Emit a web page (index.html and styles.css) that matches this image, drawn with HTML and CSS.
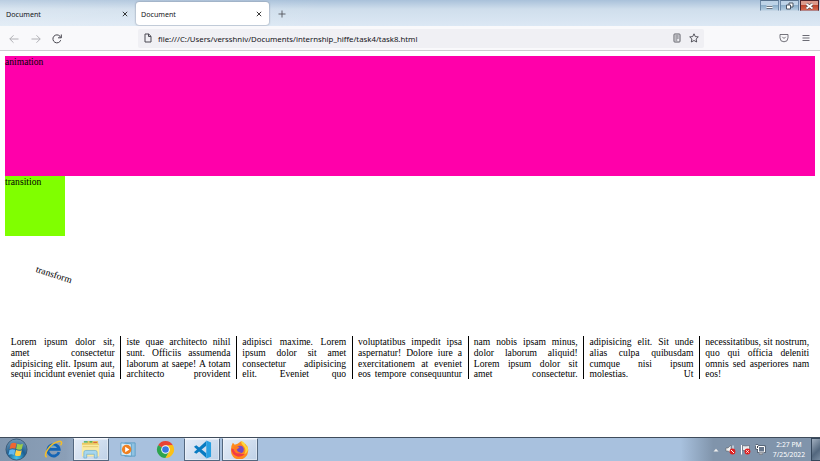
FILE: index.html
```html
<!DOCTYPE html>
<html lang="en">
<head>
<meta charset="utf-8">
<title>Document</title>
<link rel="stylesheet" href="styles.css">
</head>
<body>
<header class="tabs">
  <div class="tab"><span>Document</span><svg class="close" viewBox="0 0 6 6"><path d="M.8.8l4.4 4.4M5.2.8L.8 5.2"/></svg></div>
  <div class="tab active"><span>Document</span><svg class="close" viewBox="0 0 6 6"><path d="M.8.8l4.4 4.4M5.2.8L.8 5.2"/></svg></div>
  <svg class="plus" viewBox="0 0 8 8"><path d="M4 .5v7M.5 4h7"/></svg>
  <div class="controls">
    <div class="ctl"><svg viewBox="0 0 17 10"><path d="M5.500 6h6" stroke="#fff" stroke-width="3"/><path d="M5.500 5.500h6M5.500 7.500h6" stroke="#4b5664" stroke-width=".8"/></svg></div>
    <div class="ctl"><svg viewBox="0 0 17 10"><path d="M8 2h4v4H8z" fill="#fff" stroke="#4b5664"/><path d="M5.500 4h4v4h-4z" fill="#fff" stroke="#4b5664"/></svg></div>
    <div class="ctl red"><svg viewBox="0 0 17 10"><path d="M5.500 3l6 4.500M11.500 3l-6 4.500" stroke="#59484c" stroke-width="3"/><path d="M5.500 3l6 4.500M11.500 3l-6 4.500" stroke="#fff" stroke-width="1.700"/></svg></div>
  </div>
</header>
<nav class="toolbar">
  <svg class="tool dim" viewBox="0 0 10 10"><path d="M9.500 5H.8M4.500 1.300L.8 5l3.700 3.700"/></svg>
  <svg class="tool dim" viewBox="0 0 10 10"><path d="M.5 5h8.700M5.500 1.300L9.200 5 5.500 8.700"/></svg>
  <svg class="tool" viewBox="0 0 10 10"><path d="M8.700 6.200A4 4 0 1 1 8 2.300L9 3.500M9.300.5v3.300H6"/></svg>
  <div class="address">
    <svg class="page-icon" viewBox="0 0 8 10"><path d="M1 1h3.700L7 3.300V9H1zM4.500 1v2.500H7"/></svg>
    <span class="url">file:///C:/Users/versshniv/Documents/internship_hiffe/task4/task8.html</span>
    <svg class="reader" viewBox="0 0 8 10"><rect x="1" y="1" width="6" height="8" rx=".7"/><path d="M2.300 3h3.400M2.300 5h3.400M2.300 7h2"/></svg>
    <svg class="star" viewBox="0 0 10 10"><path d="M5 .8l1.300 2.800 3 .3-2.200 2.100.6 3L5 7.500 2.300 9l.6-3L.7 3.900l3-.3z"/></svg>
  </div>
  <svg class="pocket" viewBox="0 0 10 10"><path d="M1 1.500h8v3.300a4 4 0 0 1-8 0zM3.300 3.800L5 5.500l1.700-1.700"/></svg>
  <svg class="menu" viewBox="0 0 8 8"><path d="M.5 1.500h7M.5 4h7M.5 6.500h7"/></svg>
</nav>
<main class="page">
  <div class="animation">animation</div>
  <div class="transition">transition</div>
  <div class="transform">transform</div>
  <div class="columns">
    <p><span>Lorem ipsum dolor sit,</span><span>amet consectetur</span><span>adipisicing elit. Ipsum aut,</span><span>sequi incidunt eveniet quia</span></p>
    <p><span>iste quae architecto nihil</span><span>sunt. Officiis assumenda</span><span>laborum at saepe! A totam</span><span>architecto provident</span></p>
    <p><span>adipisci maxime. Lorem</span><span>ipsum dolor sit amet</span><span>consectetur adipisicing</span><span>elit. Eveniet quo</span></p>
    <p><span>voluptatibus impedit ipsa</span><span>aspernatur! Dolore iure a</span><span>exercitationem at eveniet</span><span>eos tempore consequuntur</span></p>
    <p><span>nam nobis ipsam minus,</span><span>dolor laborum aliquid!</span><span>Lorem ipsum dolor sit</span><span>amet consectetur.</span></p>
    <p><span>adipisicing elit. Sit unde</span><span>alias culpa quibusdam</span><span>cumque nisi ipsum</span><span>molestias. Ut</span></p>
    <p><span>necessitatibus, sit nostrum,</span><span>quo qui officia deleniti</span><span>omnis sed asperiores nam</span><span class="last">eos!</span></p>
  </div>
</main>
<footer class="taskbar">
  <div class="app start"><svg viewBox="0 0 24 24"><defs><radialGradient id="orb" cx=".5" cy=".9" r=".85"><stop offset="0" stop-color="#43c5ed"/><stop offset=".5" stop-color="#1d5f92"/><stop offset="1" stop-color="#6b93b3"/></radialGradient></defs><circle cx="12" cy="12" r="11" fill="url(#orb)" stroke="#31506d" stroke-width=".8"/><path d="M6 6q3-2 6-.3l-1.200 5.600q-3-1.500-6 .2z" fill="#ef6531"/><path d="M12.800 6q3 1.500 6 .1l-1.300 5.600q-3 1.400-5.900-.1z" fill="#9ccc4a"/><path d="M4.700 12.500q3-1.500 6-.2l-1.200 5.400q-3-1.500-6 .1z" fill="#61b8ef"/><path d="M11.500 12.600q3 1.500 6 .2l-1.300 5.400q-3 1.300-5.900-.3z" fill="#ffd149"/></svg></div>
  <div class="app ie"><svg viewBox="0 0 20 20"><path d="M15.800 12.700A6 6 0 1 1 16 9.800H5" fill="none" stroke="#1565b5" stroke-width="3"/><path d="M7 7.800Q9.500 4.500 12.500 7.800" fill="none" stroke="#55b7ee"/><path d="M3 18C-2 16 7 3 15.500 1.500c4-.6 3.500 2 2 4" fill="none" stroke="#f2bd2b" stroke-width="1.600"/></svg></div>
  <div class="app open folder"><svg viewBox="0 0 20 20"><path d="M1 3h5l1-2h11v3h1v13H1z" fill="#e9c961"/><path d="M3 2h4M9 2h3" stroke="#36a852" stroke-width="1.300"/><path d="M13 2.500h4" stroke="#d75435"/><path d="M1 5h18v12H1z" fill="#faeaa1"/><path d="M2 7h16" stroke="#e5cb74"/><path d="M3 19v-6q0-2 2-2h10q2 0 2 2v6h-3v-4H6v4z" fill="#a6d6ef" stroke="#69a9cb" stroke-width=".7"/></svg></div>
  <div class="app media"><svg viewBox="0 0 18 18"><path d="M5 2h11v14H5z" fill="#8fc2e2" stroke="#5e9fc7"/><path d="M1 2l11 1v13l-11-1z" fill="#d4eaf6" stroke="#5e9fc7"/><circle cx="7" cy="9" r="5" fill="#f08020"/><path d="M5.500 6l4.500 3-4.500 3z" fill="#fff"/></svg></div>
  <div class="app chrome"><svg viewBox="0 0 20 20"><path d="M10 10L2.200 5.500A9 9 0 0 1 17.800 5.500z" fill="#e94235"/><path d="M2.200 5.500A9 9 0 0 0 10 19l4-7-4-2z" fill="#2da44e"/><path d="M17.800 5.500A9 9 0 0 1 10 19l4-7V5.500z" fill="#fbc116"/><path d="M10 5.500h7.800L14 11z" fill="#fbc116"/><circle cx="10" cy="10" r="4.500" fill="#fff"/><circle cx="10" cy="10" r="3.500" fill="#3878e5"/></svg></div>
  <div class="app open code"><svg viewBox="0 0 20 20"><path d="M14 1v5L3.500 14.500 1 12.800z" fill="#087bc2"/><path d="M14 19v-5L3.500 5.500 1 7.200z" fill="#087bc2"/><path d="M14 .5l5 2v15l-5 2z" fill="#269fe2"/></svg></div>
  <div class="app open firefox"><svg viewBox="0 0 20 20"><path d="M3 3l2 2 3-1 4-3 2 4 2-1q4 4 3 8a9 9 0 0 1-18-1q0-5 2-8z" fill="#ff8a1e"/><path d="M12 1q-1 3 2 5 4 4 1 9 6-3 3-9l-1 1q-1-5-5-6z" fill="#ffd63a"/><path d="M1.500 9q0 7 7 8.500 5 0 7-3-5 1-8-2Q4 9 1.500 9z" fill="#f23b47"/><circle cx="10.500" cy="10" r="4" fill="#7648c5"/><path d="M4 7q4-1 6 1l-3 2q1 3 5 3-5 3-8-2z" fill="#ff7b21"/></svg></div>
  <div class="tray">
    <svg class="up" viewBox="0 0 6 4"><path d="M.5 3.500L3 .8l2.500 2.700z" fill="#eee"/></svg>
    <svg class="status" viewBox="0 0 11 11"><path d="M1 4h2l3-3v8L3 7H1z" fill="#f2f2f2" stroke="#555" stroke-width=".5"/><path d="M8 1.500v4" stroke="#fff"/><circle cx="7.500" cy="7.500" r="2.900" fill="#df2020"/><path d="M6 6l3 3" stroke="#fff"/></svg>
    <svg class="status" viewBox="0 0 11 11"><path d="M1.500 1v9.500" stroke="#fff"/><path d="M2.500 1.500l3 .5 4-.5v5h-7z" fill="#e7eaed" stroke="#445" stroke-width=".5"/><circle cx="7.500" cy="7.500" r="2.900" fill="#df2020"/><path d="M6.300 6.300l2.400 2.400m0-2.400L6.300 8.700" stroke="#fff"/></svg>
    <svg class="status net" viewBox="0 0 11 11"><path d="M3.500 2.500h6v5.500h-6zM4.500 9.900h3M.7 1.500h2.500M1.500 1.500v3h2" fill="none" stroke="#333b48" stroke-width="2"/><path d="M3.500 2.500h6v5.500h-6z" fill="#66758a"/><path d="M3.500 2.500h6v5.500h-6zM4.500 9.900h3M.7 1.500h2.500M1.500 1.500v3h2" fill="none" stroke="#fff"/></svg>
    <div class="clock"><span>2:27 PM</span><span>7/25/2022</span></div>
    <div class="peek"></div>
  </div>
</footer>
</body>
</html>
```
FILE: styles.css
```css
* { box-sizing: border-box; }
body { margin: 0; width: 820px; height: 461px; display: flex; flex-direction: column; overflow: hidden; background: #fff; font-family: "Noto Sans", sans-serif; }
svg { display: block; flex: none; }
.tabs { height: 26px; flex: none; display: flex; padding-left: 1px; background: linear-gradient(90deg, #ffffff35, transparent 40%), linear-gradient(#a9c1da, #cfdeec 35%, #dce8f4); }
.tab { width: 134px; height: 23px; margin-top: 2px; padding: 0 7px 0 5px; display: flex; align-items: center; justify-content: space-between; font-size: 7.1px; color: #15141a; }
.active { background: #fff; border-radius: 3px; box-shadow: 0 0 2px #6e7889; margin-left: 1px; width: 133px; }
.close { width: 6px; height: 6px; fill: none; stroke: #222; stroke-width: .9; }
.plus { width: 8px; height: 8px; margin: 9.500px 0 0 9px; stroke: #53565c; stroke-width: .9; }
.controls { display: flex; gap: 1px; margin-left: auto; margin-right: 1px; height: 12px; }
.ctl { width: 19px; height: 11px; border: 1px solid #6c89a7; border-top-color: #56708c; border-bottom-color: #c4d5e5; background: linear-gradient(#bdd3e7 50%, #8caeca 50%, #b2cde1); }
.ctl svg { width: 17px; height: 10px; fill: none; }
.red { border-color: #4b2028; border-bottom-color: #b3868a; background: linear-gradient(#dc9a8b 40%, #bd432c 45%, #d5674c); }
.toolbar { height: 25px; flex: none; display: flex; align-items: center; padding: 0 10px 0 9px; background: #f9f9fb; border-bottom: 1px solid #ccccd0; }
.tool { width: 10px; height: 10px; margin: 1px 11.500px 0 0; fill: none; stroke: #45444d; stroke-width: 1; }
.dim { stroke: #b0b0b5; }
.address { width: 566px; height: 19px; margin-left: 64.500px; padding: 0 5px 0 6px; display: flex; align-items: center; background: #f0f0f4; border-radius: 2px; }
.page-icon, .reader { width: 8px; height: 10px; fill: none; stroke: #4a4953; stroke-width: 1; }
.reader { margin-left: auto; stroke-width: .9; }
.star { width: 10px; height: 10px; margin-left: 8px; fill: none; stroke: #45444d; stroke-width: .9; }
.url { margin: 1px 0 0 6px; width: 270px; font-size: 7.800px; white-space: nowrap; color: #15141a; }
.pocket { width: 10px; height: 10px; margin-left: auto; fill: none; stroke: #65646d; stroke-width: .9; }
.menu { width: 8px; height: 8px; margin-left: 13px; stroke: #5b5b65; stroke-width: .9; }
.page { flex: 1; min-height: 0; padding: 5px 5px 0; font: 9.600px/10.800px "Liberation Serif", serif; color: #000; }
.animation { height: 120px; padding-top: 1px; background: #ff00aa; }
.transition { width: 60px; height: 60px; padding-top: 1px; background: #80ff00; }
.transform { width: 60px; height: 60px; margin: 36px 0 0 22px; transform: rotate(18deg); }
.columns { display: grid; grid-template-columns: repeat(7, 115.750px); margin: 4px 0 0 -.4px; }
.columns p { margin: 0; padding: 1px 5.700px 0 5.200px; border-left: 1px solid #000; height: 43px; min-width: 0; }
.columns p:first-child { border-left-color: transparent; }
.columns span { display: block; white-space: nowrap; text-align-last: justify; }
.columns .last { text-align-last: left; }
.taskbar { height: 24px; flex: none; display: flex; border-top: 1px solid #3f4c5b; background: linear-gradient(90deg, #8297af, #8b9fb7 8%, #a8c1de 13%, #a8c1de 83%, #8094ab 87%, #8094ab); }
.app { height: 23px; display: flex; align-items: center; justify-content: center; width: 36px; flex: none; }
.app svg { width: 19px; height: 19px; }
.start { width: 33px; }
.start svg { width: 23px; height: 23px; }
.ie { width: 40px; }
.open { border: 1px solid #53677f; border-top-color: #f4f8ff; background: linear-gradient(135deg, #e5edf8, #bfd1e7); box-shadow: inset 0 0 0 1px #ffffff66; border-radius: 1px; }
.folder svg { margin-right: 2px; }
.media { width: 38px; }
.media svg { width: 17px; height: 17px; }
.chrome { width: 37px; }
.firefox { margin-left: 2px; }
.firefox svg { margin-right: 1px; }
.tray { margin-left: auto; display: flex; align-items: center; }
.up { width: 6px; height: 4px; margin-right: 6px; }
.status { width: 11px; height: 11px; margin-right: 4px; }
.net { margin-right: 1px; }
.clock { width: 42px; margin: 0 1px; text-align: center; color: #fff; font-size: 6.800px; line-height: 10px; }
.clock span { display: block; }
.peek { width: 9px; height: 23px; border: 1px solid #35475c; border-right: 0; background: linear-gradient(135deg, #a2b0c0, #53677e 60%, #788ba0); }
```
